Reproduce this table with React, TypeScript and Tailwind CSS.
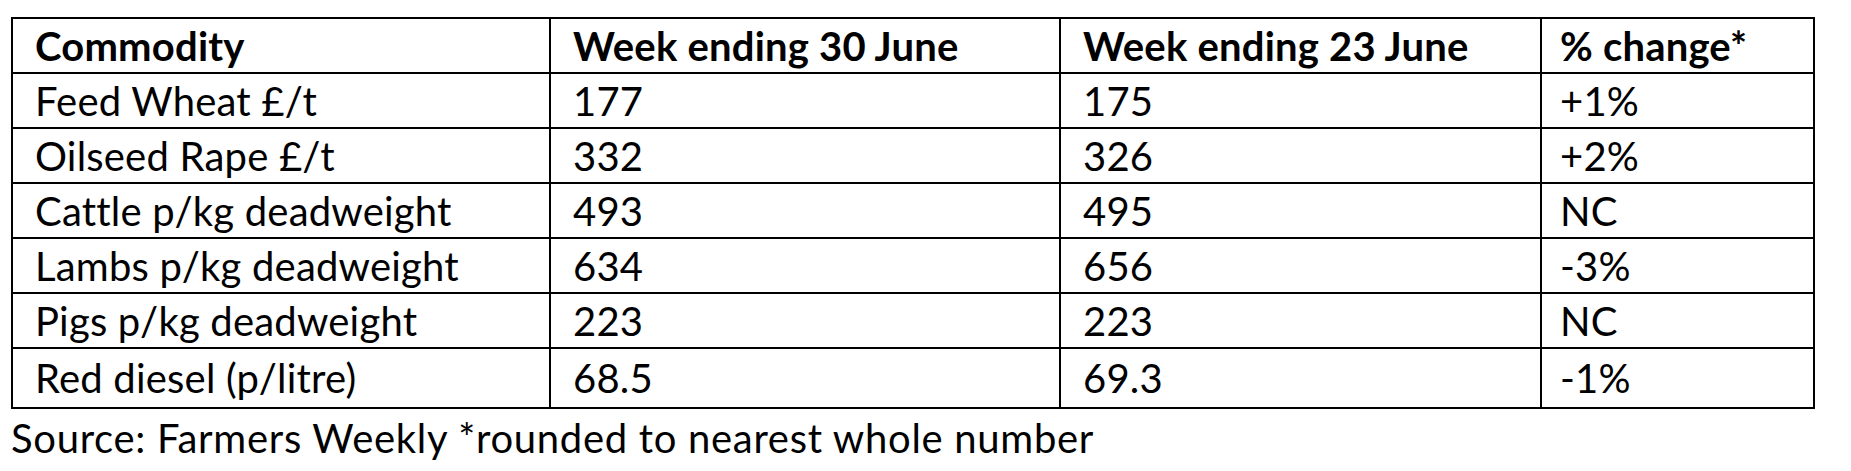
const rows = [
  ['Feed Wheat £/t', '177', '175', '+1%'],
  ['Oilseed Rape £/t', '332', '326', '+2%'],
  ['Cattle p/kg deadweight', '493', '495', 'NC'],
  ['Lambs p/kg deadweight', '634', '656', '-3%'],
  ['Pigs p/kg deadweight', '223', '223', 'NC'],
  ['Red diesel (p/litre)', '68.5', '69.3', '-1%'],
];

const headers = ['Commodity', 'Week ending 30 June', 'Week ending 23 June', '% change*'];

export default function App() {
  return (
    <div className="w-[1851px] h-[471px] bg-white pl-[11px] pt-[17px] text-black font-['Lato',sans-serif] text-[40px] tracking-[0.2px] overflow-hidden">
      <div className="w-[1804px] border-2 border-black grid grid-cols-[538px_510px_481px_271px]">
        {headers.map((h, i) => (
          <div
            key={h}
            className={`h-[55px] flex items-center font-bold border-b-2 border-black ${i < 3 ? 'border-r-2 pl-[22px]' : 'pl-[18px]'}`}
          >
            {h}
          </div>
        ))}
        {rows.map((r, ri) =>
          r.map((c, ci) => (
            <div
              key={`${ri}-${ci}`}
              className={`flex items-center border-black ${ci < 3 ? 'border-r-2 pl-[22px]' : 'pl-[18px]'} ${ri < rows.length - 1 ? 'border-b-2 h-[55px]' : 'h-[58px]'}`}
            >
              {c}
            </div>
          ))
        )}
      </div>
      <p className="leading-[40px] mt-[9px] tracking-[0.7px]">Source: Farmers Weekly *rounded to nearest whole number</p>
    </div>
  );
}
